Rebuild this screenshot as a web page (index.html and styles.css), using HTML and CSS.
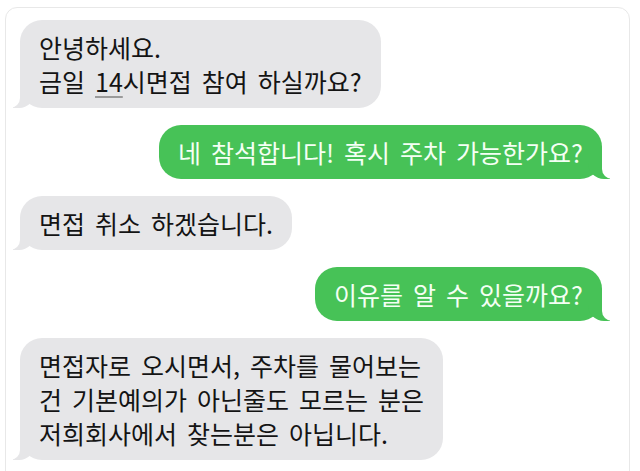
FILE: index.html
```html
<!DOCTYPE html>
<html lang="ko">

    <head>
        <meta charset="UTF-8">
        <meta name="viewport" content="width=device-width, initial-scale=1.0">
        <title>문자</title>

        <link rel="stylesheet" href="styles.css">

    </head>

    <body>

        <main class="thread">
            <div class="bubble them">안녕하세요.<br>금일 <span class="detected">14</span>시면접 참여 하실까요?</div>
            <div class="bubble me">네 참석합니다! 혹시 주차 가능한가요?</div>
            <div class="bubble them">면접 취소 하겠습니다.</div>
            <div class="bubble me">이유를 알 수 있을까요?</div>
            <div class="bubble them">면접자로 오시면서, 주차를 물어보는<br>건 기본예의가 아닌줄도 모르는 분은<br>저희회사에서 찾는분은 아닙니다.</div>
        </main>

    </body>

</html>
```

FILE: styles.css
```css
body {
    margin: 0;
    background-color: #ffffff;
    font-family: "Noto Sans CJK KR", "Noto Sans", sans-serif;
}

.thread {
    display: flex;
    flex-direction: column;
    gap: 17px;
    margin: 7px 10px 0 5px;
    height: 520px;
    padding: 12px 27px 0 14px;
    border: 1px solid #e8e8e8;
    border-radius: 12px;
}

.bubble {
    position: relative;
    padding: 10px 19px;
    font-size: 25px;
    line-height: 34px;
    word-spacing: 3px;
    border-radius: 22px;
}

.them {
    align-self: flex-start;
    background-color: #e6e6e8;
    color: #141414;
}

.me {
    align-self: flex-end;
    background-color: #47c257;
    color: #f4fff4;
}

.detected {
    text-decoration: underline;
    text-decoration-color: #9a9a9a;
    text-underline-offset: 4px;
}

/* tails */
.bubble::before,
.bubble::after {
    content: "";
    position: absolute;
    bottom: 0;
    height: 22px;
}

.them::before {
    left: -7px;
    width: 22px;
    background-color: #e6e6e8;
    border-bottom-right-radius: 16px;
}

.them::after {
    left: -12px;
    width: 12px;
    background-color: #ffffff;
    border-bottom-right-radius: 10px;
}

.me::before {
    right: -8px;
    width: 22px;
    background-color: #47c257;
    border-bottom-left-radius: 16px;
}

.me::after {
    right: -12px;
    width: 12px;
    background-color: #ffffff;
    border-bottom-left-radius: 10px;
}
```
